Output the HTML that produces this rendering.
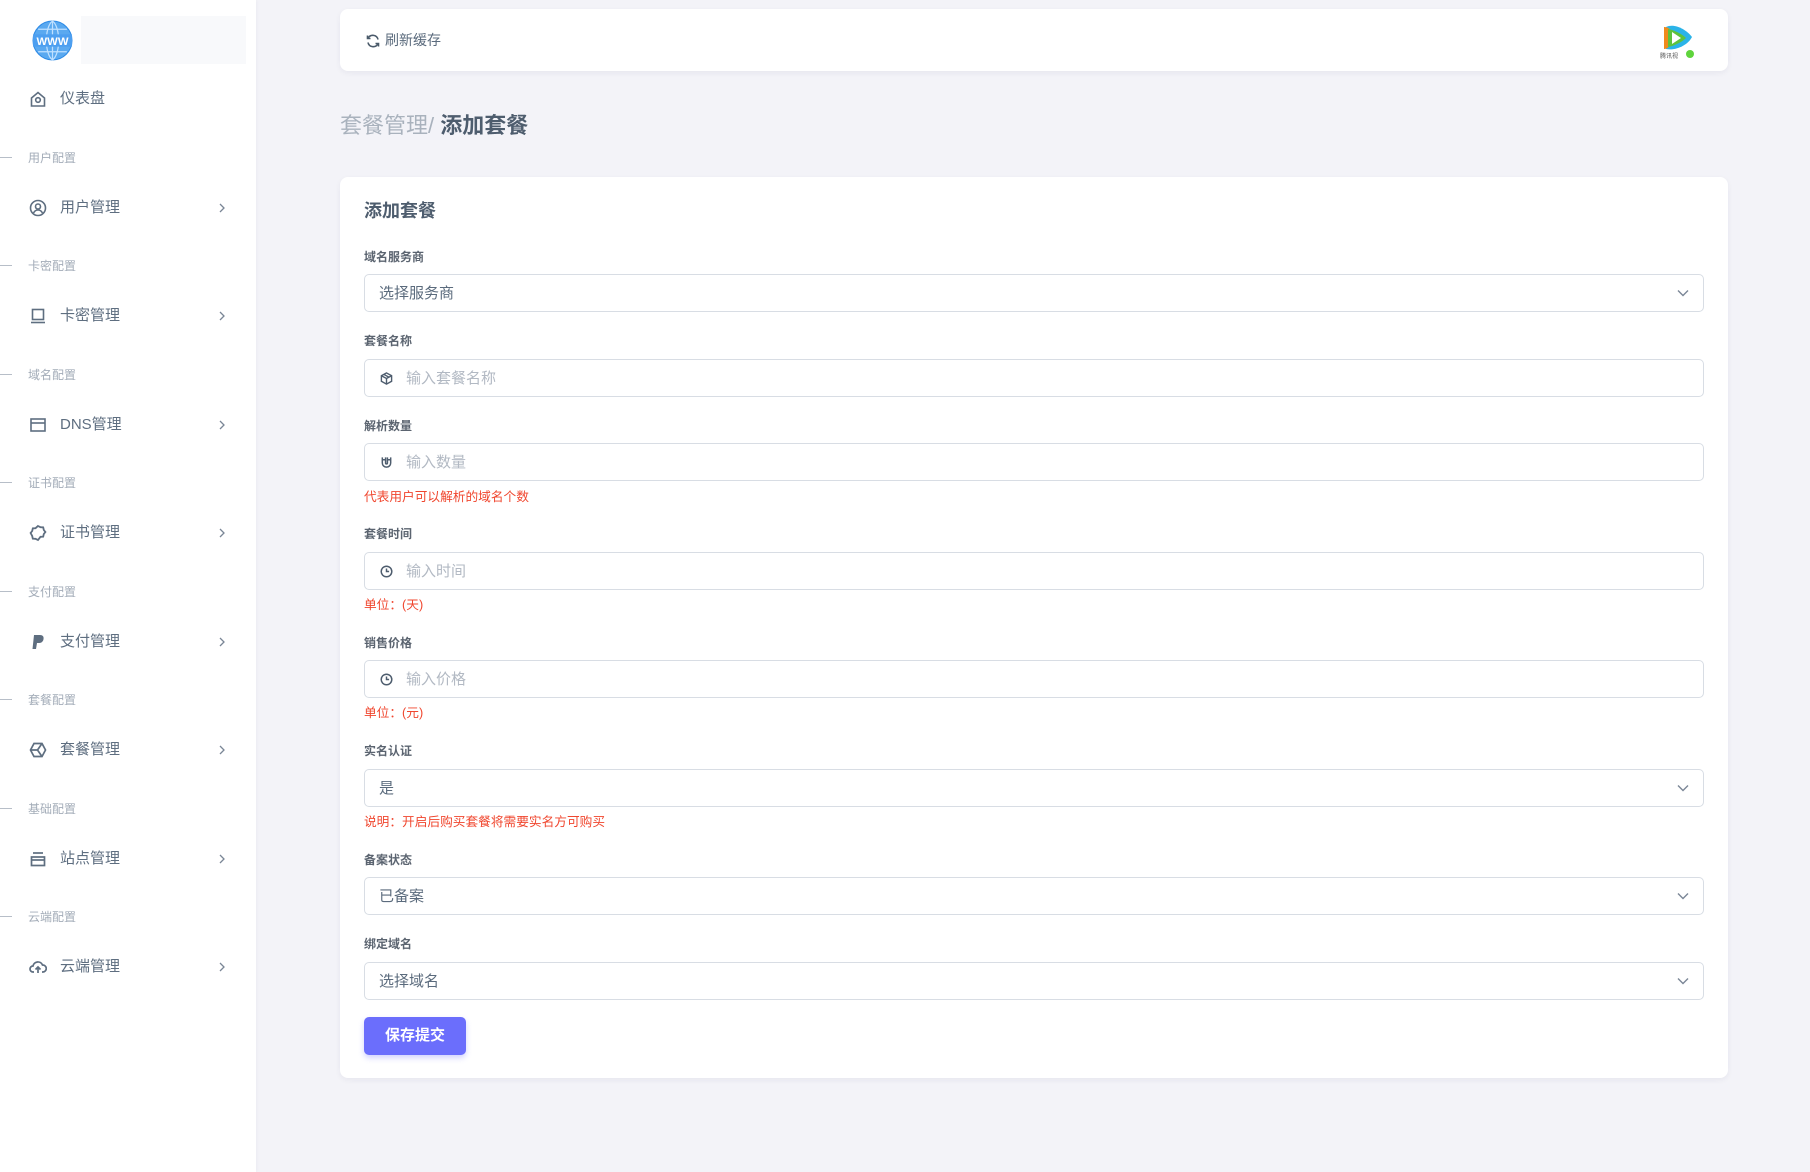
<!DOCTYPE html>
<html><head><meta charset="utf-8"><style>
*{box-sizing:border-box;margin:0;padding:0}
body{width:1810px;height:1172px;background:#f3f3f8;font-family:"Liberation Sans","Noto Sans CJK SC",sans-serif;position:relative;overflow:hidden;color:#5b6b7d}
.side{position:absolute;left:0;top:0;width:256px;height:1172px;background:#fff;box-shadow:1px 0 3px rgba(0,0,0,.03)}
.a{position:absolute}
.nav{position:absolute;left:0;width:256px;height:24px;font-size:15px;color:#5e6e80;line-height:26px}
.nav svg{position:absolute;left:29px;top:4px}
.nav span{position:absolute;left:60px}
.nav .ch{position:absolute;left:218px;top:7px}
.sec{position:absolute;left:0;font-size:12px;color:#a3acb8;line-height:18px}
.sec:before{content:"";position:absolute;left:0;top:8px;width:12px;height:1px;background:#b7bec8}
.sec span{position:absolute;left:28px;white-space:nowrap}
.card{position:absolute;background:#fff;border-radius:8px;box-shadow:0 2px 6px rgba(40,40,80,.06)}
.lbl{position:absolute;left:364px;font-size:12px;color:#5b6470;font-weight:bold;line-height:18px}
.inp{position:absolute;left:364px;width:1340px;height:38px;border:1px solid #d8dde4;border-radius:5px;background:#fff;font-size:15px;line-height:38px}
.inp .t{position:absolute;left:14px;color:#5b6b7d}
.inp .p{position:absolute;left:41px;color:#b2b9c3}
.inp svg.ic{position:absolute;left:15px;top:12px}
.inp .dd{position:absolute;right:14px;top:14px}
.hint{position:absolute;left:364px;font-size:12.7px;color:#f0462e;line-height:18px}
</style></head><body>
<div class="side">
 <svg class="a" style="left:32px;top:20px" width="41" height="41" viewBox="0 0 40 40"><circle cx="20" cy="20" r="19" fill="#5aa9f0"/><circle cx="20" cy="20" r="19" fill="none" stroke="#2d8ae6" stroke-width="1"/><path d="M20 1v38M1 20h38M6 9h28M6 31h28M20 1c-8 6-8 32 0 38M20 1c8 6 8 32 0 38" stroke="#bfe0ff" stroke-width="1.2" fill="none"/><rect x="1" y="14" width="38" height="12" fill="#4d9ff0"/><text x="20" y="24.5" font-size="11" font-weight="bold" fill="#fff" text-anchor="middle" font-family="Liberation Sans">WWW</text></svg>
 <div class="a" style="left:81px;top:16px;width:165px;height:48px;background:#f8f9fb"></div>

 <div class="nav" style="top:86px"><svg width="18" height="18" viewBox="0 0 18 18" fill="none" stroke="#5e6e80" stroke-width="1.6"><path d="M2.5 8L9 2.5 15.5 8V16h-13z"/><circle cx="9" cy="10" r="2.3"/></svg><span>仪表盘</span></div>

 <div class="sec" style="top:149px"><span>用户配置</span></div>
 <div class="nav" style="top:195px"><svg width="18" height="18" viewBox="0 0 18 18" fill="none" stroke="#5e6e80" stroke-width="1.6"><circle cx="9" cy="9" r="7.5"/><circle cx="9" cy="7.5" r="2.5"/><path d="M4.5 14c1-2 2.5-3 4.5-3s3.5 1 4.5 3"/></svg><span>用户管理</span><svg class="ch" width="8" height="12" viewBox="0 0 8 12"><path d="M2 2l4 4-4 4" stroke="#7a8696" stroke-width="1.3" fill="none"/></svg></div>

 <div class="sec" style="top:257px"><span>卡密配置</span></div>
 <div class="nav" style="top:303px"><svg width="18" height="18" viewBox="0 0 18 18" fill="none" stroke="#5e6e80" stroke-width="1.6"><rect x="3.5" y="2.5" width="11" height="10"/><path d="M2 15.5h14"/></svg><span>卡密管理</span><svg class="ch" width="8" height="12" viewBox="0 0 8 12"><path d="M2 2l4 4-4 4" stroke="#7a8696" stroke-width="1.3" fill="none"/></svg></div>

 <div class="sec" style="top:366px"><span>域名配置</span></div>
 <div class="nav" style="top:412px"><svg width="18" height="18" viewBox="0 0 18 18" fill="none" stroke="#5e6e80" stroke-width="1.6"><rect x="2" y="3" width="14" height="12"/><path d="M2 7h14"/></svg><span>DNS管理</span><svg class="ch" width="8" height="12" viewBox="0 0 8 12"><path d="M2 2l4 4-4 4" stroke="#7a8696" stroke-width="1.3" fill="none"/></svg></div>

 <div class="sec" style="top:474px"><span>证书配置</span></div>
 <div class="nav" style="top:520px"><svg width="18" height="18" viewBox="0 0 18 18" fill="none" stroke="#5e6e80" stroke-width="1.8"><path d="M9 2l2.5 1.2 2.7.2.6 2.6 1.6 2-1.6 2-.6 2.6-2.7.2L9 16l-2.5-1.2-2.7-.2-.6-2.6L1.6 9l1.6-2 .6-2.6 2.7-.2z"/></svg><span>证书管理</span><svg class="ch" width="8" height="12" viewBox="0 0 8 12"><path d="M2 2l4 4-4 4" stroke="#7a8696" stroke-width="1.3" fill="none"/></svg></div>

 <div class="sec" style="top:583px"><span>支付配置</span></div>
 <div class="nav" style="top:629px"><svg width="18" height="18" viewBox="0 0 18 18"><path d="M5 2h6c3 0 4 2 3.5 4.2C14 9 12 10 9.5 10H8l-1 6H3.5z" fill="#5e6e80"/></svg><span>支付管理</span><svg class="ch" width="8" height="12" viewBox="0 0 8 12"><path d="M2 2l4 4-4 4" stroke="#7a8696" stroke-width="1.3" fill="none"/></svg></div>

 <div class="sec" style="top:691px"><span>套餐配置</span></div>
 <div class="nav" style="top:737px"><svg width="18" height="18" viewBox="0 0 18 18" fill="none" stroke="#5e6e80" stroke-width="1.7"><path d="M5 2.5h8L16.5 9 13 15.5H5L1.5 9z"/><path d="M1.5 9h7l4.5-6.5M8.5 9l4.5 6.5"/></svg><span>套餐管理</span><svg class="ch" width="8" height="12" viewBox="0 0 8 12"><path d="M2 2l4 4-4 4" stroke="#7a8696" stroke-width="1.3" fill="none"/></svg></div>

 <div class="sec" style="top:800px"><span>基础配置</span></div>
 <div class="nav" style="top:846px"><svg width="18" height="18" viewBox="0 0 18 18" fill="none" stroke="#5e6e80" stroke-width="1.7"><path d="M4 3h10"/><rect x="2.5" y="7" width="13" height="8.5"/><path d="M2.5 10h13"/></svg><span>站点管理</span><svg class="ch" width="8" height="12" viewBox="0 0 8 12"><path d="M2 2l4 4-4 4" stroke="#7a8696" stroke-width="1.3" fill="none"/></svg></div>

 <div class="sec" style="top:908px"><span>云端配置</span></div>
 <div class="nav" style="top:954px"><svg width="18" height="18" viewBox="0 0 18 18" fill="none" stroke="#5e6e80" stroke-width="1.7"><path d="M5 14H4a3 3 0 010-6 5 5 0 019.5-1A3.5 3.5 0 0114 14h-1"/><path d="M9 15V9M6.5 11.5L9 9l2.5 2.5"/></svg><span>云端管理</span><svg class="ch" width="8" height="12" viewBox="0 0 8 12"><path d="M2 2l4 4-4 4" stroke="#7a8696" stroke-width="1.3" fill="none"/></svg></div>
</div>

<div class="card" style="left:340px;top:9px;width:1388px;height:62px">
 <svg class="a" style="left:25px;top:24px" width="16" height="16" viewBox="0 0 16 16" fill="none" stroke="#4a5a6a" stroke-width="1.6"><path d="M13 6.5A5.3 5.3 0 003.2 5M3 9.5A5.3 5.3 0 0012.8 11"/><path d="M2.5 2.5v3h3M13.5 13.5v-3h-3"/></svg>
 <div class="a" style="left:45px;top:21px;font-size:14px;color:#5b6b7d;line-height:20px">刷新缓存</div>
 <svg class="a" style="left:1320px;top:12px" width="36" height="40" viewBox="0 0 36 40"><path d="M6 6c8-4 20 2 26 10-4 8-16 14-26 12z" fill="#2bb3e8"/><path d="M4 6c4 0 8 2 8 10S8 28 4 28z" fill="#f08a1c"/><path d="M8 8c6 1 14 5 18 9-4 4-12 8-18 9z" fill="#5ec23c"/><path d="M12 11l9 6-9 6z" fill="#fff"/><circle cx="30" cy="33" r="4" fill="#5fd43c"/><text x="0" y="37" font-size="6" fill="#555">腾讯视</text></svg>
</div>

<div class="a" style="left:340px;top:111px;font-size:22px;line-height:30px;color:#a9b2bd">套餐管理/ <b style="color:#4e5d6e">添加套餐</b></div>

<div class="card" style="left:340px;top:177px;width:1388px;height:901px"></div>
<div class="a" style="left:364px;top:199px;font-size:18px;font-weight:bold;color:#4e5d6e;line-height:24px">添加套餐</div>

<div class="lbl" style="top:248px">域名服务商</div>
<div class="inp" style="top:274px"><span class="t">选择服务商</span><svg class="dd" width="12" height="8" viewBox="0 0 12 8"><path d="M1 1.5l5 5 5-5" stroke="#7a8696" stroke-width="1.4" fill="none"/></svg></div>

<div class="lbl" style="top:332px">套餐名称</div>
<div class="inp" style="top:359px"><svg class="ic" width="13" height="13" viewBox="0 0 14 14" fill="none" stroke="#4e5d6e" stroke-width="1.5"><path d="M7 1l5.5 3v6L7 13 1.5 10V4z"/><path d="M1.5 4L7 7l5.5-3M7 7v6M4 2.5l5.5 3"/></svg><span class="p">输入套餐名称</span></div>

<div class="lbl" style="top:417px">解析数量</div>
<div class="inp" style="top:443px"><svg class="ic" width="13" height="13" viewBox="0 0 14 14" fill="none" stroke="#4e5d6e" stroke-width="1.6"><path d="M2.5 1.5v6a4.5 4.5 0 009 0v-6M6 1.5v6a1 1 0 002 0v-6M2.5 4h3.5M8 4h3.5"/></svg><span class="p">输入数量</span></div>
<div class="hint" style="top:488px">代表用户可以解析的域名个数</div>

<div class="lbl" style="top:525px">套餐时间</div>
<div class="inp" style="top:552px"><svg class="ic" width="13" height="13" viewBox="0 0 14 14" fill="none" stroke="#4e5d6e" stroke-width="1.6"><circle cx="7" cy="7" r="5.7"/><path d="M7 3.8V7h2.8"/></svg><span class="p">输入时间</span></div>
<div class="hint" style="top:596px">单位：(天)</div>

<div class="lbl" style="top:634px">销售价格</div>
<div class="inp" style="top:660px"><svg class="ic" width="13" height="13" viewBox="0 0 14 14" fill="none" stroke="#4e5d6e" stroke-width="1.6"><circle cx="7" cy="7" r="5.7"/><path d="M7 3.8V7h2.8"/></svg><span class="p">输入价格</span></div>
<div class="hint" style="top:704px">单位：(元)</div>

<div class="lbl" style="top:742px">实名认证</div>
<div class="inp" style="top:769px"><span class="t">是</span><svg class="dd" width="12" height="8" viewBox="0 0 12 8"><path d="M1 1.5l5 5 5-5" stroke="#7a8696" stroke-width="1.4" fill="none"/></svg></div>
<div class="hint" style="top:813px">说明：开启后购买套餐将需要实名方可购买</div>

<div class="lbl" style="top:851px">备案状态</div>
<div class="inp" style="top:877px"><span class="t">已备案</span><svg class="dd" width="12" height="8" viewBox="0 0 12 8"><path d="M1 1.5l5 5 5-5" stroke="#7a8696" stroke-width="1.4" fill="none"/></svg></div>

<div class="lbl" style="top:935px">绑定域名</div>
<div class="inp" style="top:962px"><span class="t">选择域名</span><svg class="dd" width="12" height="8" viewBox="0 0 12 8"><path d="M1 1.5l5 5 5-5" stroke="#7a8696" stroke-width="1.4" fill="none"/></svg></div>

<div class="a" style="left:364px;top:1017px;width:102px;height:38px;background:#6b6efc;border-radius:5px;box-shadow:0 3px 6px rgba(107,110,252,.3);color:#fff;font-size:15px;font-weight:bold;text-align:center;line-height:38px">保存提交</div>
</body></html>
